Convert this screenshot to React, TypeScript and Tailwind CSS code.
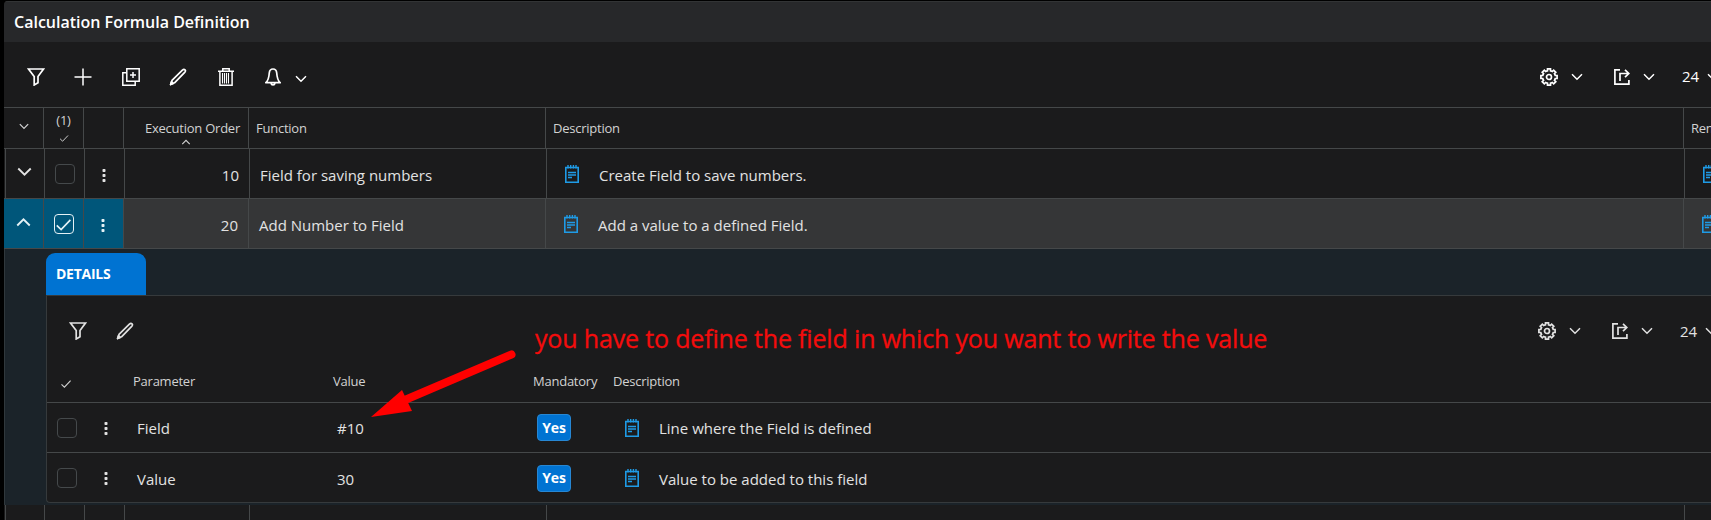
import type { ReactNode } from "react";
import clsx from "clsx";

type IconProps = { className?: string };

function FilterIcon({ className }: IconProps) {
  return (
    <svg viewBox="0 0 18 18" fill="none" stroke="currentColor" strokeWidth="1.7" className={clsx("block h-[18px] w-[18px] shrink-0", className)}>
      <path d="M1.5 1h15L11 8.5v6.2L7.2 17V8.5z" />
    </svg>
  );
}

function PlusIcon({ className }: IconProps) {
  return (
    <svg viewBox="0 0 18 18" fill="none" stroke="currentColor" strokeWidth="1.5" className={clsx("block h-[18px] w-[18px] shrink-0", className)}>
      <path d="M9 .5v17M.5 9h17" />
    </svg>
  );
}

function CopyIcon({ className }: IconProps) {
  return (
    <svg viewBox="0 0 18 18" fill="none" stroke="currentColor" strokeWidth="1.5" className={clsx("block h-[18px] w-[18px] shrink-0", className)}>
      <path d="M4.8 .8H17.2V13.2H4.8z" />
      <path d="M4.5 4.8H.8V17.2H13.2V13.5M11 4v6M8 7h6" />
    </svg>
  );
}

function PencilIcon({ className }: IconProps) {
  return (
    <svg viewBox="0 0 18 18" fill="none" stroke="currentColor" strokeWidth="1.7" strokeLinejoin="round" className={clsx("block h-[18px] w-[18px] shrink-0", className)}>
      <path d="M1.6 16.5L3 12.4 13.4 2.2c1-.9 2-.9 2.6-.3s.6 1.5-.3 2.500L5.5 14.8z" />
      <path d="M1.6 16.5l.9-2.8 1.8 1.8z" fill="currentColor" />
    </svg>
  );
}

function TrashIcon({ className }: IconProps) {
  return (
    <svg viewBox="0 0 18 18" fill="none" stroke="currentColor" strokeWidth="1.5" className={clsx("block h-[18px] w-[18px] shrink-0", className)}>
      <path d="M1 3.3h16M5.8 3V.8h6.4V3M2.9 3.5v13.7h12.2V3.5" />
      <path d="M5.5 5v10.5M7.5 5v10.5M9.5 5v10.5M11.5 5v10.5" strokeWidth="1.1" />
    </svg>
  );
}

function BellIcon({ className }: IconProps) {
  return (
    <svg viewBox="0 0 18 18" fill="none" stroke="currentColor" strokeWidth="1.7" strokeLinejoin="round" className={clsx("block h-[18px] w-[18px] shrink-0", className)}>
      <path d="M9 1C6.8 1 5.5 2.6 5.3 4.8 5 9.5 4.5 12.500 1.8 14.7h14.4C13.5 12.5 13 9.5 12.7 4.8 12.5 2.6 11.2 1 9 1z" />
      <path d="M7 15c.4 2.4 3.6 2.4 4 0" />
    </svg>
  );
}

// outline of the cog: eight square teeth around the hub
const GEAR_TEETH = [0, 45, 90, 135, 180, 225, 270, 315];

function GearIcon({ className }: IconProps) {
  return (
    <svg viewBox="0 0 18 18" fill="none" stroke="currentColor" strokeWidth="1.7" className={clsx("block h-[18px] w-[18px] shrink-0", className)}>
      <circle cx="9" cy="9" r="2.5" />
      {GEAR_TEETH.map((a) => (
        <path key={a} transform={`rotate(${a} 9 9)`} d="M6.3 3.2L7.5 2.8V.9h3v1.9l1.2.4" />
      ))}
    </svg>
  );
}

function ShareIcon({ className }: IconProps) {
  return (
    <svg viewBox="0 0 16 16" fill="none" stroke="currentColor" strokeWidth="1.7" className={clsx("block h-4 w-4 shrink-0", className)}>
      <path d="M6 .9H.9v14.2h14V11" />
      <path d="M6 12V4.5h8.5M11 .8l3.8 3.7L11 8.2" />
    </svg>
  );
}

function Chevron({ up, className }: { up?: boolean; className?: string }) {
  return (
    <svg viewBox="0 0 12 8" fill="none" stroke="currentColor" strokeWidth="1.5" className={clsx("block shrink-0", className)}>
      <path d={up ? "M1 6.8l5-5 5 5" : "M1 1.2l5 5 5-5"} />
    </svg>
  );
}

function Check({ className }: IconProps) {
  return (
    <svg viewBox="0 0 10 8" fill="none" stroke="currentColor" strokeWidth="1.1" className={clsx("block shrink-0", className)}>
      <path d="M.5 4.3l2.9 2.8L9.6.6" />
    </svg>
  );
}

function NoteIcon({ className }: IconProps) {
  return (
    <svg viewBox="0 0 14 18" fill="none" stroke="currentColor" className={clsx("block h-[18px] w-[14px] shrink-0 text-[#1f9be6]", className)}>
      <path d="M.8 2.5h12.4v14.7H.8z" strokeWidth="1.6" />
      <path d="M3 0v3.5M5.7 0v3.5M8.4 0v3.5M11 0v3.5" strokeWidth="1.4" />
      <path d="M3 7.5h8M3 10h8M3 12.5h4" strokeWidth="1.3" />
    </svg>
  );
}

function Dots() {
  return (
    <svg viewBox="0 0 4 14" fill="currentColor" className="block h-[14px] w-1 shrink-0">
      <rect x=".5" y="0" width="3" height="3" rx=".8" />
      <rect x=".5" y="5" width="3" height="3" rx=".8" />
      <rect x=".5" y="10" width="3" height="3" rx=".8" />
    </svg>
  );
}

function Checkbox({ checked }: { checked?: boolean }) {
  return (
    <span className={clsx("flex h-5 w-5 shrink-0 items-center justify-center rounded-[4px] border", checked ? "border-[#e4f1f5]" : "border-[#45494b]")}>
      {checked && <Check className="mt-0.5 h-3 w-[15px]" />}
    </span>
  );
}

function ViewTools() {
  return (
    <div className="flex items-center">
      <GearIcon />
      <Chevron className="ml-[13px] h-2 w-3" />
      <ShareIcon className="ml-[31px]" />
      <Chevron className="ml-[13px] h-2 w-3" />
      <span className="ml-[27px] w-[18px] text-[15px]">24</span>
      <Chevron className="ml-2 h-2 w-3" />
    </div>
  );
}

const COLS = "grid grid-cols-[40px_40px_40px_125px_297px_1138px_1fr]";

function Cell({ children, className }: { children?: ReactNode; className?: string }) {
  return <div className={clsx("flex items-center overflow-hidden border-r border-[#454849] whitespace-nowrap", className)}>{children}</div>;
}

type Row = { order: number; fn: string; desc: string; open: boolean };

const ROWS: Row[] = [
  { order: 10, fn: "Field for saving numbers", desc: "Create Field to save numbers.", open: false },
  { order: 20, fn: "Add Number to Field", desc: "Add a value to a defined Field.", open: true },
];

const PARAMS = [
  { name: "Field", value: "#10", desc: "Line where the Field is defined" },
  { name: "Value", value: "30", desc: "Value to be added to this field" },
];

function FormulaRow({ row }: { row: Row }) {
  const lead = row.open ? "bg-[#00567a] border-[#1f6580] text-[#e4f1f5]" : "";
  return (
    <div className={clsx(COLS, "h-[50px] border-b border-b-[#454849] text-[15px]", row.open ? "bg-[#353637]" : "pl-px")}>
      <Cell className={clsx("justify-center pb-1", lead, !row.open && "border-l pr-0.5")}>
        <Chevron up={row.open} className="h-[10px] w-[15px]" />
      </Cell>
      <Cell className={clsx("justify-center", lead)}>
        <Checkbox checked={row.open} />
      </Cell>
      <Cell className={clsx("justify-center pt-1 pr-px", lead)}>
        <Dots />
      </Cell>
      <Cell className="justify-end pt-1 pr-2.5">{row.order}</Cell>
      <Cell className="pt-1 pl-2.5">{row.fn}</Cell>
      <Cell className="pl-[18px]">
        <NoteIcon />
        <span className="ml-5 pt-1">{row.desc}</span>
      </Cell>
      <div className="flex items-center overflow-hidden pl-[18px]">
        <NoteIcon />
      </div>
    </div>
  );
}

function Details() {
  return (
    <section className="h-64 border-l border-[#30383c] bg-[#1b2329] pt-1 pl-[41px]">
      <div className="h-[42px] w-[100px] rounded-t-[9px] bg-[#0073d2] pt-[11px] pl-2.5 text-sm font-bold tracking-[-0.25px] text-white">DETAILS</div>
      <div className="h-52 rounded-bl-[4px] border-y border-l border-[#363a3c] bg-[#1b1b1c]">
        <div className="flex h-[70px] items-center justify-between pl-[22px]">
          <div className="flex gap-[29px]">
            <FilterIcon />
            <PencilIcon />
          </div>
          <div className="w-[173px] overflow-hidden">
            <ViewTools />
          </div>
        </div>
        <div className="grid h-[37px] grid-cols-[86px_200px_200px_80px_1fr] border-b border-[#454849] pt-1.5 text-[13px] tracking-[-0.24px] text-[#d2d2d2]">
          <Check className="mt-2 ml-3.5 h-2 w-2.5" />
          <span>Parameter</span>
          <span>Value</span>
          <span>Mandatory</span>
          <span>Description</span>
        </div>
        {PARAMS.map((p) => (
          <div key={p.name} className="grid h-[50px] grid-cols-[46px_44px_200px_200px_1fr] items-center border-b border-[#454849] text-[15px] last:border-b-0">
            <div className="pl-2.5">
              <Checkbox />
            </div>
            <div className="flex pt-0.5 pl-[11px]">
              <Dots />
            </div>
            <span className="pt-0.5">{p.name}</span>
            <span className="pt-0.5">{p.value}</span>
            <div className="flex items-center">
              <span className="flex h-[27px] w-[34px] items-center justify-center rounded-[4px] border border-[#2787d3] bg-[#0073d2] text-sm font-bold tracking-[-0.2px] text-white">Yes</span>
              <NoteIcon className="ml-[54px]" />
              <span className="ml-5 pt-0.5">{p.desc}</span>
            </div>
          </div>
        ))}
      </div>
    </section>
  );
}

function Annotation() {
  return (
    <>
      <svg viewBox="0 0 150 75" className="absolute top-[348px] left-[368px] h-[75px] w-[150px]">
        <path d="M38 51.5L143.5 6.5" stroke="#ff0000" strokeWidth="8" strokeLinecap="round" />
        <path d="M3 69L34 42l10 21z" fill="#ff0000" />
      </svg>
      <p className="absolute top-[320px] left-[535px] text-[25px] leading-9 tracking-[-0.16px] whitespace-nowrap text-[#f40c0c] [-webkit-text-stroke:0.3px_#f40c0c]">
        you have to define the field in which you want to write the value
      </p>
    </>
  );
}

export default function App() {
  return (
    <div className="relative h-[520px] w-full overflow-hidden bg-black pt-px pl-1 font-['Open_Sans','Noto_Sans',sans-serif] text-[#e2e2e2]">
      <main className="h-[519px] overflow-hidden rounded-tl-[4px] bg-[#1b1b1c]">
        <header className="h-[41px] border-t border-[#323435] bg-[#27282a] pt-2 pl-2.5 text-base font-semibold text-white">Calculation Formula Definition</header>
        <div className="flex h-[65px] items-center justify-between pt-1 pl-[23px] text-white">
          <div className="flex items-center">
            <FilterIcon />
            <PlusIcon className="ml-[29px]" />
            <CopyIcon className="ml-[30px]" />
            <PencilIcon className="ml-[29px]" />
            <TrashIcon className="ml-[30px]" />
            <BellIcon className="ml-[29px]" />
            <Chevron className="mt-1 ml-[13px] h-2 w-3" />
          </div>
          <div className="w-[171px] overflow-hidden">
            <ViewTools />
          </div>
        </div>
        <div className={clsx(COLS, "h-[42px] border-y border-[#454849] text-[13px] tracking-[-0.24px] text-[#d2d2d2]")}>
          <Cell className="justify-center pb-1">
            <Chevron className="h-[7px] w-2.5" />
          </Cell>
          <Cell className="flex-col justify-center pb-0.5">
            <span className="leading-[14px]">(1)</span>
            <Check className="mt-2 h-[7px] w-2.5" />
          </Cell>
          <Cell />
          <Cell className="relative justify-end pt-0.5 pr-2">
            Execution Order
            <Chevron up className="absolute bottom-[3px] left-[57px] h-1.5 w-2.5" />
          </Cell>
          <Cell className="pt-0.5 pl-[7px]">Function</Cell>
          <Cell className="pt-0.5 pl-[7px]">Description</Cell>
          <div className="flex items-center overflow-hidden pt-0.5 pl-[7px]">Remark</div>
        </div>
        {ROWS.map((row) => (
          <FormulaRow key={row.order} row={row} />
        ))}
        <Details />
        <div className={clsx(COLS, "h-4 pl-px")}>
          <Cell className="border-l" />
          <Cell />
          <Cell />
          <Cell />
          <Cell />
          <Cell />
        </div>
      </main>
      <Annotation />
    </div>
  );
}
